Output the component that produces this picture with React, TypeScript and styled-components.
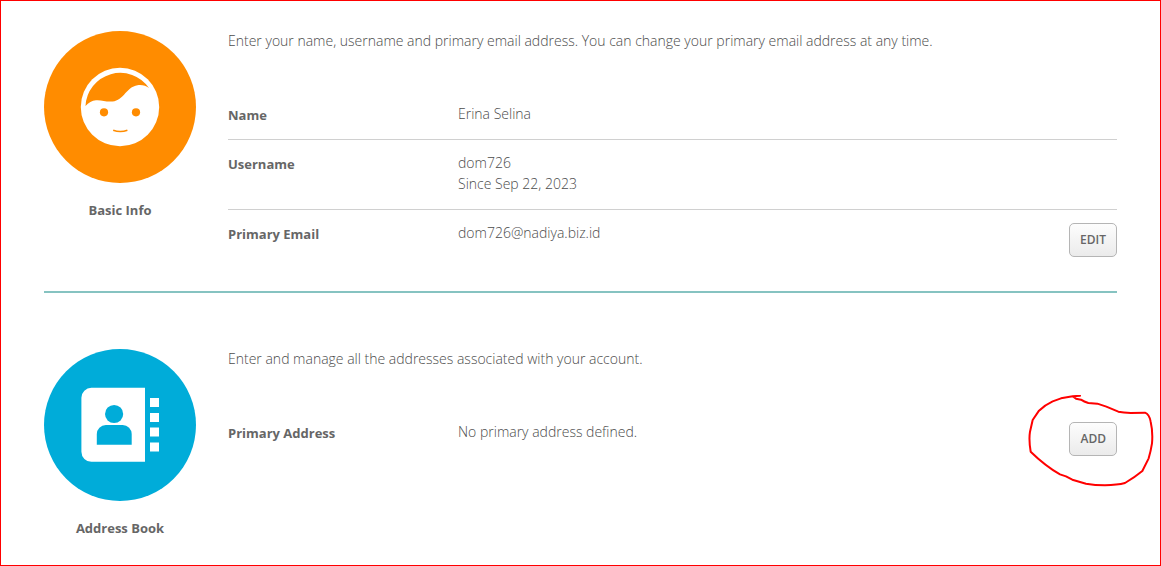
import React from "react";
import styled, { createGlobalStyle } from "styled-components";

const GlobalStyle = createGlobalStyle`
  *, *::before, *::after { box-sizing: border-box; }
  body {
    margin: 0;
    background: #fff;
    color: #4c4c4c;
    font: 300 14px/21px "Open Sans", "Noto Sans", sans-serif;
  }
`;

const Page = styled.main`
  min-height: 100vh;
  padding: 30px 43px 24px;
  border: 1px solid #f00;
`;

const Section = styled.section`
  display: flex;
  gap: 32px;

  & + & {
    margin-top: 19px;
    padding-top: 56px;
    border-top: 2px solid #86c3c1;
  }
`;

const Badge = styled.div`
  display: flex;
  flex: none;
  flex-direction: column;
  gap: 17px;
  width: 152px;
  text-align: center;

  svg { display: block; }
`;

const Caption = styled.h2`
  margin: 0;
  color: #666;
  font-size: 13px;
  font-weight: 700;
  line-height: 21px;
`;

const Content = styled.div`
  flex: 1;
  min-width: 0;
`;

const Intro = styled.p`
  margin: 0 0 41px;
  line-height: 19px;
`;

const Fields = styled.dl`
  margin: 0;
`;

const Field = styled.div`
  display: flex;
  align-items: flex-start;
  padding: 12px 0 15px;

  & + & { border-top: 1px solid #d0d0d0; }
`;

const Label = styled.dt`
  flex: none;
  width: 230px;
  padding-top: 4px;
  color: #666;
  font-size: 13px;
  font-weight: 700;
  line-height: 17px;
`;

const Value = styled.dd`
  flex: 1;
  margin: 0;
`;

const Line = styled.span`
  display: block;
`;

const Action = styled.dd`
  position: relative;
  margin: 1px 0 0;
`;

const Button = styled.button`
  display: block;
  height: 34px;
  padding: 0 10px;
  border: 1px solid #b5b5b5;
  border-radius: 5px;
  background: linear-gradient(#fdfdfd, #ebebeb);
  color: #666;
  font: 600 12px/32px "Open Sans", sans-serif;
  text-transform: uppercase;
  cursor: pointer;
`;

const Scribble = styled.svg`
  position: absolute;
  top: -27px;
  left: -41px;
  pointer-events: none;
`;

const FaceIcon = () => (
  <svg width="152" height="152" viewBox="0 0 152 152" aria-hidden="true">
    <circle cx="76" cy="76" r="76" fill="#ff8c00" />
    <circle cx="76" cy="76" r="39.2" fill="#fff" />
    <path
      d="M41.5 75A34.8 34.8 0 0 1 105 57C102 54.5 98 53.7 93.5 54.2C88 55 84 59 80 63.7C76 68 72 70.8 66 70.6C61 70.4 57 68.8 52 69.2C48 69.6 44.5 71.5 41.5 75Z"
      fill="#ff8c00"
    />
    <circle cx="60" cy="81.3" r="4.1" fill="#ff8c00" />
    <circle cx="92" cy="81.3" r="4.1" fill="#ff8c00" />
    <path d="M69.2 99.2Q76.3 101.8 83.4 99.2" fill="none" stroke="#ff8c00" strokeWidth="1.6" />
  </svg>
);

const BookIcon = () => (
  <svg width="152" height="152" viewBox="0 0 152 152" aria-hidden="true">
    <circle cx="76" cy="76" r="76" fill="#00acd9" />
    <path d="M47.5 38.8H101V112.8H47.5A10 10 0 0 1 37.4 102.8V48.8A10 10 0 0 1 47.5 38.8Z" fill="#fff" />
    <circle cx="70.1" cy="65" r="9.1" fill="#00acd9" />
    <path d="M52.8 95.8V85A9 9 0 0 1 61.8 76H78.7A9 9 0 0 1 87.7 85V95.8Z" fill="#00acd9" />
    <path d="M106 49h9v9h-9zM106 64h9v9h-9zM106 78.6h9v9h-9zM106 93.4h9v9h-9z" fill="#fff" />
  </svg>
);

const HandCircle = () => (
  <Scribble width="130" height="95" viewBox="54 45 390 285" aria-hidden="true">
    <path
      d="M210 47L188 49L153 55L128 64Q106 74 87 92L68 120L60 155Q56 180 62 215Q106 258 150 283L168 289L187 299L228 311Q255 316 285 316Q322 315 345 309Q374 292 397 273L416 235Q422 215 426 190Q429 155 422 125Q418 103 405 98L362 99Q340 98 325 95L289 80L262 71L235 69Q222 65 213 59L198 56L190 50"
      fill="none"
      stroke="#f00"
      strokeWidth="6"
      strokeLinecap="round"
      strokeLinejoin="round"
    />
  </Scribble>
);

export default function App() {
  return (
    <>
      <GlobalStyle />
      <Page>
        <Section>
          <Badge>
            <FaceIcon />
            <Caption>Basic Info</Caption>
          </Badge>
          <Content>
            <Intro>
              Enter your name, username and primary email address. You can change your primary email address at any time.
            </Intro>
            <Fields>
              <Field>
                <Label>Name</Label>
                <Value>Erina Selina</Value>
              </Field>
              <Field>
                <Label>Username</Label>
                <Value>
                  <Line>dom726</Line>
                  <Line>Since Sep 22, 2023</Line>
                </Value>
              </Field>
              <Field>
                <Label>Primary Email</Label>
                <Value>dom726@nadiya.biz.id</Value>
                <Action>
                  <Button type="button">Edit</Button>
                </Action>
              </Field>
            </Fields>
          </Content>
        </Section>
        <Section>
          <Badge>
            <BookIcon />
            <Caption>Address Book</Caption>
          </Badge>
          <Content>
            <Intro>Enter and manage all the addresses associated with your account.</Intro>
            <Fields>
              <Field>
                <Label>Primary Address</Label>
                <Value>No primary address defined.</Value>
                <Action>
                  <Button type="button">Add</Button>
                  <HandCircle />
                </Action>
              </Field>
            </Fields>
          </Content>
        </Section>
      </Page>
    </>
  );
}
